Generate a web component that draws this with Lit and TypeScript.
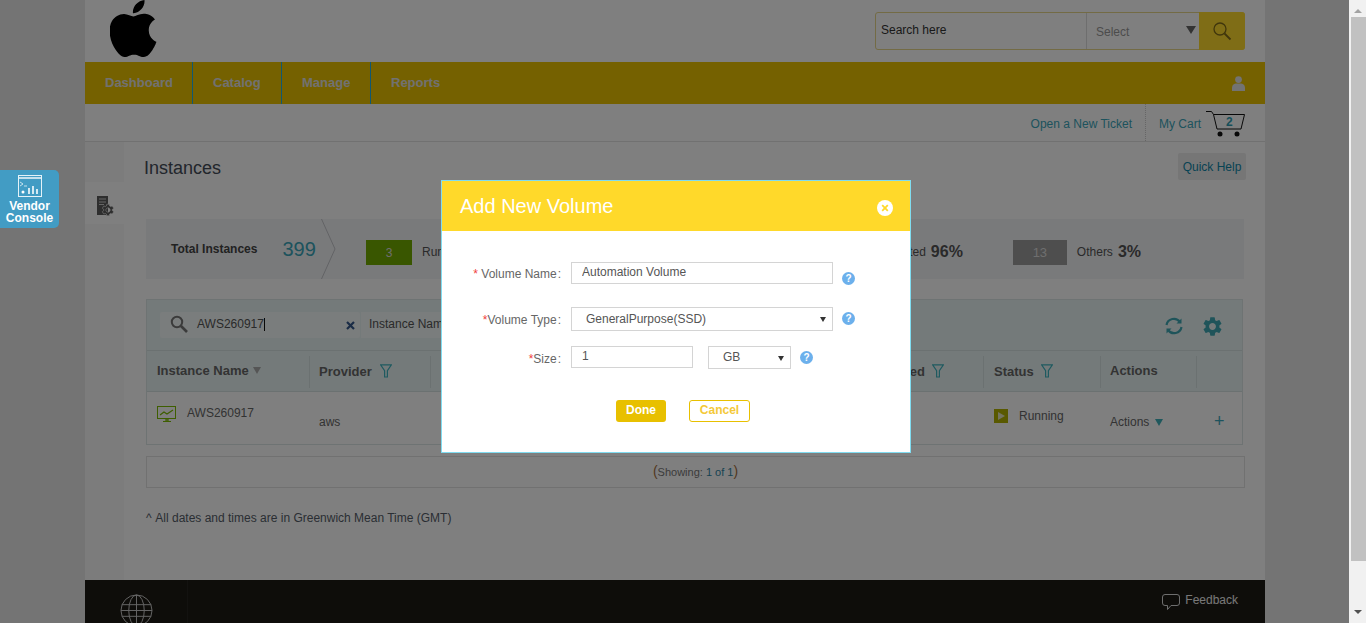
import { LitElement, html, css } from "lit";
import { customElement } from "lit/decorators.js";

const GEAR =
  "M19.14 12.94c.04-.3.06-.61.06-.94 0-.32-.02-.64-.07-.94l2.03-1.58a.49.49 0 0 0 .12-.61l-1.92-3.32a.488.488 0 0 0-.59-.22l-2.39.96c-.5-.38-1.03-.7-1.62-.94l-.36-2.54a.484.484 0 0 0-.48-.41h-3.84c-.24 0-.43.17-.47.41l-.36 2.54c-.59.24-1.13.57-1.62.94l-2.39-.96c-.22-.08-.47 0-.59.22L2.74 8.87c-.12.21-.08.47.12.61l2.03 1.58c-.05.3-.09.63-.09.94s.02.64.07.94l-2.03 1.58a.49.49 0 0 0-.12.61l1.92 3.32c.12.22.37.29.59.22l2.39-.96c.5.38 1.03.7 1.62.94l.36 2.54c.05.24.24.41.48.41h3.84c.24 0 .44-.17.47-.41l.36-2.54c.59-.24 1.13-.56 1.62-.94l2.39.96c.22.08.47 0 .59-.22l1.92-3.32c.12-.22.07-.47-.12-.61l-2.01-1.58zM12 15.6c-1.98 0-3.6-1.62-3.6-3.6s1.62-3.6 3.6-3.6 3.6 1.62 3.6 3.6-1.62 3.6-3.6 3.6z";
const APPLE =
  "M12.152 6.896c-.948 0-2.415-1.078-3.96-1.04-2.04.027-3.91 1.183-4.961 3.014-2.117 3.675-.546 9.103 1.519 12.09 1.013 1.454 2.208 3.09 3.792 3.039 1.52-.065 2.09-.987 3.935-.987 1.831 0 2.35.987 3.96.948 1.637-.026 2.676-1.48 3.676-2.948 1.156-1.688 1.636-3.325 1.662-3.415-.039-.013-3.182-1.221-3.22-4.857-.026-3.04 2.48-4.494 2.597-4.559-1.429-2.09-3.623-2.324-4.39-2.376-2-.156-3.675 1.09-4.61 1.09zM15.53 3.83c.843-1.012 1.4-2.427 1.245-3.83-1.207.052-2.662.805-3.532 1.818-.78.896-1.454 2.338-1.273 3.714 1.338.104 2.715-.688 3.559-1.701";

const filterIcon = html`<svg class="filter" width="12" height="14" viewBox="0 0 12 14" fill="none" stroke="#3fb4c0" stroke-width="1.2">
  <path d="M.6.8h10.8L7.4 6.6v6.4H4.6V6.6z" />
</svg>`;

const helpIcon = html`<span class="help">?</span>`;

const NAV = ["Dashboard", "Catalog", "Manage", "Reports"];

@customElement("app-root")
export class AppRoot extends LitElement {
  static styles = css`
    :host {
      display: flex;
      width: 1366px;
      height: 623px;
      overflow: hidden;
      position: relative;
      font-family: "Liberation Sans", Arial, sans-serif;
      font-size: 12px;
      color: #555;
    }
    * {
      box-sizing: border-box;
    }
    .page {
      position: relative;
      flex: 1;
      background: #e8e8e8;
      padding-left: 85px;
      overflow: hidden;
    }
    .shell {
      width: 1180px;
      height: 623px;
      background: #fff;
      display: flex;
      flex-direction: column;
    }
    .overlay {
      position: absolute;
      inset: 0;
      background: rgba(0, 0, 0, 0.5);
    }

    /* top */
    .top {
      height: 62px;
      flex: none;
      display: flex;
      justify-content: space-between;
      align-items: center;
      padding: 0 20px 0 25px;
    }
    .logo {
      align-self: flex-start;
      display: block;
    }
    .search {
      width: 370px;
      height: 38px;
      display: flex;
      border: 1px solid #e6d68a;
      border-radius: 3px;
      background: #fff;
    }
    .search-text {
      width: 211px;
      padding: 10px 0 0 5px;
      color: #333;
      border-right: 1px solid #ddd;
    }
    .search-select {
      flex: 1;
      position: relative;
      padding: 12px 0 0 9px;
      color: #999;
    }
    .search-select::after {
      content: "";
      position: absolute;
      right: 4px;
      top: 13px;
      border: 5px solid transparent;
      border-top: 8px solid #666;
      border-bottom: 0;
    }
    .search-btn {
      width: 46px;
      margin: -1px;
      background: #ffdb2c;
      border-radius: 0 3px 3px 0;
      display: flex;
      align-items: center;
      justify-content: center;
    }
    nav {
      height: 42px;
      flex: none;
      background: #eac200;
      display: flex;
      align-items: center;
      padding-right: 20px;
    }
    nav a {
      width: 89px;
      height: 42px;
      padding-left: 20px;
      line-height: 41px;
      font-size: 13px;
      font-weight: bold;
      color: #e2e2e2;
      border-right: 1px solid #1fb0e8;
    }
    nav a:first-of-type {
      width: 108px;
    }
    nav a:last-of-type {
      border-right: 0;
    }
    nav svg {
      margin-left: auto;
    }
    .sub {
      height: 38px;
      flex: none;
      border-bottom: 1px solid #e2e2e2;
      display: flex;
      justify-content: flex-end;
      align-items: stretch;
      padding-right: 20px;
      color: #3aa6ba;
    }
    .ticket {
      padding: 13px 13px 0 0;
      border-right: 1px dotted #ccc;
    }
    .cart-label {
      padding: 13px 5px 0 13px;
    }
    .cart {
      position: relative;
      width: 39px;
      margin-top: 7px;
    }
    .cart b {
      position: absolute;
      left: 20px;
      top: 4px;
      font-size: 12px;
      color: #2f9fb4;
    }

    /* body */
    .body {
      flex: 1;
      display: flex;
      min-height: 0;
    }
    .side {
      width: 39px;
      flex: none;
      background: #f9f9f9;
      padding-top: 40px;
    }
    .side-cell {
      height: 42px;
      background: #fff;
      padding: 14px 0 0 12px;
    }
    .main {
      flex: 1;
      padding: 11px 20px 0 20px;
      min-width: 0;
    }
    .head {
      display: flex;
      justify-content: space-between;
      height: 27px;
    }
    h1 {
      margin: 5px 0 0;
      font-size: 18px;
      font-weight: normal;
      color: #444c58;
    }
    .quick {
      width: 68px;
      margin-right: -1px;
      background: #ececec;
      color: #0f86a8;
      text-align: center;
      line-height: 28px;
      border-radius: 2px;
    }
    .stats {
      margin: 39px 1px 0 2px;
      height: 60px;
      background: #f3f4f7;
      display: flex;
      align-items: center;
      position: relative;
    }
    .total {
      width: 197px;
      padding-left: 25px;
      font-weight: bold;
      color: #444;
      display: flex;
      align-items: center;
    }
    .total span {
      margin-left: 25px;
      font-size: 20px;
      font-weight: normal;
      color: #3aa6ba;
    }
    .chevron {
      position: absolute;
      left: 175px;
      top: 0;
    }
    .stat {
      display: flex;
      align-items: center;
      margin-top: 6px;
    }
    .stat i {
      height: 25px;
      font-style: normal;
      text-align: center;
      line-height: 26px;
      color: #ddd;
      margin-right: 10px;
    }
    .stat b {
      margin-left: 5px;
      font-size: 16px;
      color: #555;
    }
    .stat-run {
      margin-left: 23px;
    }
    .stat-run i {
      width: 46px;
      background: #72ac00;
    }
    .stat-term {
      margin-left: auto;
    }
    .stat-term i {
      width: 46px;
      background: #d0a000;
    }
    .stat-other {
      margin-left: 50px;
      margin-right: 103px;
    }
    .stat-other i {
      width: 54px;
      background: #9c9c9c;
      font-size: 13px;
    }
    .table {
      margin: 20px 2px 0 2px;
      border: 1px solid #dde6e6;
    }
    .tools {
      height: 51px;
      background: #e8f5f5;
      border-bottom: 1px solid #d6e2e2;
      display: flex;
      align-items: center;
      padding: 0 18px 0 13px;
    }
    .find {
      width: 200px;
      height: 26px;
      background: #f4fafa;
      border-radius: 2px;
      display: flex;
      align-items: center;
      padding: 0 5px 2px 10px;
      color: #555;
    }
    .caret {
      width: 1px;
      height: 13px;
      background: #111;
    }
    .find svg:last-child {
      margin: 2px 0 0 auto;
    }
    .find-by {
      margin-left: 1px;
      padding-left: 8px;
      height: 26px;
      line-height: 24px;
      width: 200px;
      background: #f4fafa;
    }
    .tool-icons {
      margin: 2px 0 0 auto;
      display: flex;
      gap: 18px;
      align-items: center;
    }
    .cols {
      display: grid;
      grid-template-columns: 163px 121px 553px 117px 96px 46px;
    }
    .cols.th {
      height: 41px;
      background: #e8f5f5;
      border-bottom: 1px solid #d6e2e2;
      align-items: center;
      font-size: 13px;
      font-weight: bold;
      color: #666;
    }
    .th > div {
      height: 32px;
      margin-top: 1px;
      border-right: 1px solid #d6e2e2;
      padding: 8px 0 0 10px;
      display: flex;
      gap: 7px;
    }
    .th > .raised {
      padding-top: 7px;
      gap: 4px;
    }
    .th > .tight {
      padding-left: 9px;
      gap: 8px;
    }
    .th > div:last-child {
      border: 0;
    }
    .th > .right {
      justify-content: flex-end;
      padding-right: 39px;
    }
    .sort {
      margin-top: 4px;
      border: 4px solid transparent;
      border-top: 7px solid #aaa;
      border-bottom: 0;
      height: 0;
    }
    .cols.td {
      height: 52px;
      color: #666;
    }
    .td > div {
      padding: 23px 0 0 10px;
    }
    .td > .tight {
      padding-left: 9px;
    }
    .td .name {
      padding: 14px 0 0 10px;
      display: flex;
      gap: 10px;
    }
    .td .status {
      padding: 17px 0 0 10px;
      display: flex;
      gap: 11px;
    }
    .play {
      width: 14px;
      height: 14px;
      background: #b3b300;
      display: flex;
      align-items: center;
      justify-content: center;
    }
    .play::after {
      content: "";
      border: 4px solid transparent;
      border-left: 7px solid #e8e8c0;
      border-right: 0;
    }
    .down {
      display: inline-block;
      margin-left: 2px;
      border: 4.5px solid transparent;
      border-top: 7px solid #3fb0ba;
      border-bottom: 0;
    }
    .td .plus {
      padding: 19px 0 0 17px;
      font-size: 18px;
      line-height: 20px;
      color: #3aa6ba;
    }
    .pager {
      margin: 11px 0 0 2px;
      height: 32px;
      border: 1px solid #e2e2e2;
      text-align: center;
      font-size: 11px;
      line-height: 29px;
      color: #777;
    }
    .pager big {
      font-size: 14px;
      color: #a57040;
    }
    .pager span {
      color: #2f86a4;
    }
    .note {
      margin: 23px 0 0 2px;
      color: #555d68;
    }
    .note span {
      margin-right: 1px;
    }
    footer {
      height: 43px;
      flex: none;
      background: #1c1a14;
      display: flex;
      overflow: hidden;
      padding: 0 27px 0 35px;
      color: #f0f0f0;
    }
    .globe-cell {
      width: 68px;
      height: 100%;
      padding-top: 14px;
      border-right: 1px solid #262420;
    }
    .globe-cell svg {
      display: block;
    }
    .feedback {
      margin-left: auto;
      display: flex;
      gap: 5px;
      padding-top: 13px;
    }

    /* floats over the dim layer */
    .vendor {
      position: absolute;
      left: 0;
      top: 170px;
      width: 59px;
      height: 58px;
      background: #429cc4;
      border-radius: 0 5px 5px 0;
      color: #fff;
      text-align: center;
      font-weight: bold;
      font-size: 12px;
      line-height: 12px;
      padding-top: 5px;
    }
    .vendor svg {
      display: block;
      margin: 0 auto 3px;
    }
    .modal {
      position: absolute;
      left: 441px;
      top: 180px;
      width: 470px;
      height: 273px;
      background: #fff;
      border: 1px solid #80dcf0;
      display: flex;
      flex-direction: column;
      color: #666;
    }
    .modal header {
      height: 50px;
      background: #ffd92a;
      color: #fff;
      font-size: 20px;
      padding: 0 17px 0 18px;
      display: flex;
      align-items: center;
      justify-content: space-between;
    }
    .close {
      margin-top: 3px;
    }
    .form {
      padding-top: 31px;
      display: flex;
      flex-direction: column;
    }
    .row {
      display: flex;
      align-items: flex-start;
    }
    .row label {
      width: 119px;
      text-align: right;
      color: #666;
      margin-right: 10px;
    }
    .row label em {
      color: #f04040;
      font-style: normal;
    }
    .row label span {
      margin-left: 1px;
    }
    .row input,
    .row select {
      font: inherit;
      color: #555;
      border: 1px solid #d4d4d4;
      background: #fff;
      border-radius: 0;
      outline: 0;
      margin: 0;
    }
    .row input {
      height: 22px;
      padding: 0 0 2px 10px;
    }
    .row select {
      appearance: none;
      width: 100%;
      height: 100%;
      padding: 0 0 1px 14px;
      display: block;
    }
    .picker {
      position: relative;
      display: block;
    }
    .picker::after {
      content: "";
      position: absolute;
      right: 7px;
      top: 50%;
      margin-top: -2px;
      border: 3px solid transparent;
      border-top: 5px solid #333;
      border-bottom: 0;
    }
    .help {
      width: 13px;
      height: 13px;
      border-radius: 50%;
      background: #6cb0ec;
      color: #fff;
      font-size: 10px;
      font-weight: bold;
      line-height: 13px;
      text-align: center;
      flex: none;
    }
    .r1 {
      height: 45px;
    }
    .r1 label {
      padding-top: 5px;
    }
    .r1 input {
      width: 262px;
    }
    .r1 .help {
      margin: 10px 0 0 9px;
    }
    .r2 {
      height: 39px;
    }
    .r2 label {
      padding-top: 6px;
    }
    .r2 .picker {
      width: 262px;
      height: 24px;
    }
    .r2 .help {
      margin: 5px 0 0 9px;
    }
    .r3 label {
      padding-top: 6px;
    }
    .r3 input {
      width: 122px;
    }
    .r3 .picker {
      width: 83px;
      height: 23px;
      margin-left: 15px;
    }
    .r3 .help {
      margin: 5px 0 0 9px;
    }
    .buttons {
      display: flex;
      gap: 23px;
      justify-content: flex-start;
      padding: 31px 0 0 174px;
    }
    .buttons span {
      height: 22px;
      border-radius: 3px;
      font-weight: bold;
      text-align: center;
    }
    .done {
      width: 50px;
      line-height: 21px;
      background: #e8c000;
      color: #fff;
    }
    .cancel {
      width: 61px;
      line-height: 19px;
      border: 1px solid #e8c000;
      color: #f4c93a;
    }

    .scrollbar {
      width: 17px;
      flex: none;
      background: #f1f1f1;
      position: relative;
    }
    .thumb {
      position: absolute;
      left: 2px;
      right: 0;
      top: 17px;
      height: 544px;
      background: #c1c1c1;
    }
    .arrow-up,
    .arrow-down {
      position: absolute;
      left: 5px;
      border: 4px solid transparent;
    }
    .arrow-up {
      top: 5px;
      border-bottom: 4px solid #a3a3a3;
    }
    .arrow-down {
      bottom: 5px;
      border-top: 4px solid #505050;
    }
  `;

  private renderTop() {
    return html`
      <div class="top">
        <svg class="logo" width="47" height="57" viewBox="2.4 0 19.6 24" preserveAspectRatio="none">
          <path d=${APPLE} fill="#000" />
        </svg>
        <div class="search">
          <div class="search-text">Search here</div>
          <div class="search-select">Select</div>
          <div class="search-btn">
            <svg width="20" height="20" viewBox="0 0 20 20" fill="none" stroke="#806c18" stroke-width="1.3">
              <circle cx="8" cy="8" r="6" />
              <path d="M12.5 12.5l6 6" stroke-width="1.8" />
            </svg>
          </div>
        </div>
      </div>
      <nav>
        ${NAV.map((n) => html`<a>${n}</a>`)}
        <svg width="13" height="15" viewBox="0 0 13 15" fill="#e6e6e6">
          <circle cx="6.5" cy="3.6" r="3.4" />
          <path d="M0 15v-3.5C0 9 2.5 7.6 4 7.6h5c1.5 0 4 1.4 4 3.9V15z" />
        </svg>
      </nav>
      <div class="sub">
        <div class="ticket">Open a New Ticket</div>
        <div class="cart-label">My Cart</div>
        <div class="cart">
          <svg width="39" height="27" viewBox="0 0 39 27" fill="none" stroke="#111" stroke-width="1">
            <path d="M0 .5h5.5l2 3H38.500l-3.500 14.500H11L7.500 3.500" />
            <circle cx="14" cy="23" r="2.500" fill="#111" stroke="none" />
            <circle cx="31" cy="23" r="2.500" fill="#111" stroke="none" />
          </svg>
          <b>2</b>
        </div>
      </div>
    `;
  }

  private renderStats() {
    return html`
      <div class="stats">
        <div class="total">Total Instances<span>399</span></div>
        <svg class="chevron" width="15" height="60" viewBox="0 0 15 60" fill="none" stroke="#c4c6ca">
          <path d="M.5 0L14 30 .5 60" />
        </svg>
        <div class="stat stat-run"><i>3</i>Running <b>1%</b></div>
        <div class="stat stat-term"><i>383</i>Terminated <b>96%</b></div>
        <div class="stat stat-other"><i>13</i>Others <b>3%</b></div>
      </div>
    `;
  }

  private renderTable() {
    return html`
      <div class="table">
        <div class="tools">
          <div class="find">
            <svg width="18" height="18" viewBox="0 0 18 18" fill="none" stroke="#777" style="margin-right:9px">
              <circle cx="7" cy="7" r="5.200" stroke-width="2" />
              <path d="M11 11l6 6" stroke-width="2.600" />
            </svg>
            AWS260917<span class="caret"></span>
            <svg width="9" height="9" viewBox="0 0 9 9" stroke="#34588c" stroke-width="2.200">
              <path d="M1 1l7 7M8 1L1 8" />
            </svg>
          </div>
          <div class="find-by">Instance Name</div>
          <div class="tool-icons">
            <svg width="18" height="18" viewBox="0 0 18 18" fill="none" stroke="#3fa9b5" stroke-width="2.200">
              <path d="M1.500 8A7.500 7.500 0 0 1 15 5" />
              <path d="M16.500 10A7.500 7.500 0 0 1 3 13" />
              <path d="M16.500 1.500v5h-5z" fill="#3fa9b5" stroke="none" />
              <path d="M1.500 16.500v-5h5z" fill="#3fa9b5" stroke="none" />
            </svg>
            <svg width="23" height="23" viewBox="0 0 24 24" fill="#3fa9b5"><path d=${GEAR} /></svg>
          </div>
        </div>
        <div class="cols th">
          <div class="raised">Instance Name<span class="sort"></span></div>
          <div class="tight">Provider ${filterIcon}</div>
          <div class="right">Created ${filterIcon}</div>
          <div>Status ${filterIcon}</div>
          <div class="raised tight">Actions</div>
          <div></div>
        </div>
        <div class="cols td">
          <div class="name">
            <svg width="20" height="18" viewBox="0 0 20 18" fill="none" stroke="#7cbc00" style="flex:none">
              <rect x=".5" y=".5" width="18" height="12" />
              <path d="M3 9l4-3 3 2 6-4" stroke-width="1.200" />
              <path d="M9 13h2v2H9zM6 15.500h8" stroke-width="1.200" />
            </svg>
            AWS260917
          </div>
          <div class="tight">aws</div>
          <div></div>
          <div class="status"><span class="play"></span>Running</div>
          <div class="tight">Actions <span class="down"></span></div>
          <div class="plus">+</div>
        </div>
      </div>
    `;
  }

  private renderModal() {
    return html`
      <div class="modal">
        <header>
          Add New Volume
          <svg class="close" width="16" height="16" viewBox="0 0 16 16">
            <circle cx="8" cy="8" r="8" fill="#fff" />
            <path d="M5.200 5.200l5.600 5.600M10.800 5.200l-5.600 5.600" stroke="#ffd92a" stroke-width="1.800" />
          </svg>
        </header>
        <div class="form">
          <div class="row r1">
            <label><em>*</em> Volume Name<span>:</span></label>
            <input value="Automation Volume" />
            ${helpIcon}
          </div>
          <div class="row r2">
            <label><em>*</em>Volume Type<span>:</span></label>
            <span class="picker"><select><option>GeneralPurpose(SSD)</option></select></span>
            ${helpIcon}
          </div>
          <div class="row r3">
            <label><em>*</em>Size<span>:</span></label>
            <input value="1" />
            <span class="picker"><select><option>GB</option></select></span>
            ${helpIcon}
          </div>
          <div class="buttons">
            <span class="done">Done</span>
            <span class="cancel">Cancel</span>
          </div>
        </div>
      </div>
    `;
  }

  render() {
    return html`
      <div class="page">
        <div class="shell">
          ${this.renderTop()}
          <div class="body">
            <div class="side">
              <div class="side-cell">
                <svg width="18" height="21" viewBox="0 0 18 21">
                  <path d="M0 0h11v19H0z" fill="#5c5c5c" />
                  <path d="M2 3h7M2 6h7M2 8.500h5" stroke="#ccc" />
                  <g transform="translate(3.800 6.800) scale(.6)"><path d=${GEAR} fill="#5c5c5c" stroke="#fff" stroke-width="1" /></g>
                </svg>
              </div>
            </div>
            <div class="main">
              <div class="head">
                <h1>Instances</h1>
                <div class="quick">Quick Help</div>
              </div>
              ${this.renderStats()} ${this.renderTable()}
              <div class="pager"><big>(</big>Showing: <span>1 of 1</span><big>)</big></div>
              <div class="note"><span>^</span> All dates and times are in Greenwich Mean Time (GMT)</div>
            </div>
          </div>
          <footer>
            <div class="globe-cell">
              <svg width="33" height="33" viewBox="0 0 34 34" fill="none" stroke="#ccc" stroke-width="1">
                <circle cx="17" cy="17" r="16" />
                <ellipse cx="17" cy="17" rx="8" ry="16" />
                <path d="M17 1v32M2 11h30M1 17h32M2 23h30" />
              </svg>
            </div>
            <div class="feedback">
              <svg width="18" height="17" viewBox="0 0 18 17" fill="none" stroke="#ddd" style="margin-top:1px">
                <path d="M3 .5h12a2.500 2.500 0 0 1 2.500 2.500v6a2.500 2.500 0 0 1-2.500 2.500H9L5.500 15.500v-4H3A2.500 2.500 0 0 1 .5 9V3A2.500 2.500 0 0 1 3 .5z" />
              </svg>
              Feedback
            </div>
          </footer>
        </div>
        <div class="overlay"></div>
        ${this.renderModal()}
        <div class="vendor">
          <svg width="24" height="22" viewBox="0 0 24 22" fill="none" stroke="#e4f2f8">
            <rect x=".5" y=".5" width="23" height="21" />
            <path d="M1 3h22" stroke-width="1.600" />
            <path d="M2 7l3 2-3 2M6 11h3" stroke-width=".8" />
            <circle cx="5" cy="17" r="1.500" fill="#fff" stroke="none" />
            <path d="M11 19v-6M15 19v-8M19 19v-5" stroke-width="1.800" />
          </svg>
          Vendor<br />Console
        </div>
      </div>
      <div class="scrollbar">
        <span class="arrow-up"></span>
        <div class="thumb"></div>
        <span class="arrow-down"></span>
      </div>
    `;
  }
}
